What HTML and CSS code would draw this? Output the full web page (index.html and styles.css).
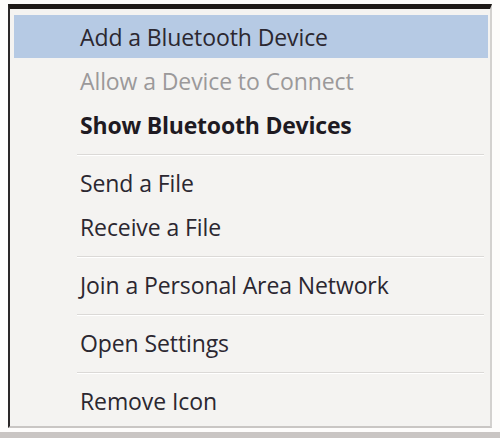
FILE: index.html
```html
<!DOCTYPE html>
<html lang="en">
    <head>
        <meta charset="UTF-8">
        <title>Bluetooth menu</title>
        <link rel="stylesheet" href="styles.css">
    </head>
    <body>
        <div class="menu">
            <div class="item active">Add a Bluetooth Device</div>
            <div class="item disabled">Allow a Device to Connect</div>
            <div class="item bold">Show Bluetooth Devices</div>
            <div class="sep"></div>
            <div class="item">Send a File</div>
            <div class="item">Receive a File</div>
            <div class="sep"></div>
            <div class="item">Join a Personal Area Network</div>
            <div class="sep"></div>
            <div class="item">Open Settings</div>
            <div class="sep"></div>
            <div class="item">Remove Icon</div>
        </div>
        <div class="shadow"></div>
    </body>
</html>
```

FILE: styles.css
```css
*{
    padding: 0;
    margin: 0;
    box-sizing: border-box;
}
body{background-color: #fdfcfb; font-family: "Open Sans", "Noto Sans", sans-serif;}
.menu{
    margin: 4px 0 0 8px;
    width: 484px;
    background-color: #f4f3f1;
    border-top: 5px solid #1d1917;
    border-left: 2px solid #2b2727;
    border-right: 2px solid #d3d1cf;
    border-bottom: 2px solid #c9c6c4;
    padding: 6px 2px 4px 4px;
    display: flex;
    flex-direction: column;
}
.item{height: 44px; line-height: 46px; padding-left: 66px; font-size: 23px; color: #2b2730; letter-spacing: -0.1px;}
.active{background-color: #b6cae4; height: 43px; line-height: 45px;}
.disabled{color: #9b999a;}
.bold{font-weight: 700; color: #1e1a22; letter-spacing: -0.2px;}
.sep{height: 14px; padding-top: 8px; margin: 0 4px 0 63px;}
.sep::before{content: ""; display: block; height: 1px; background-color: #dbd9d7; border-bottom: 1px solid #fff;}
.shadow{margin-top: 4px; height: 8px; background-color: #c9c5c3;}
```
